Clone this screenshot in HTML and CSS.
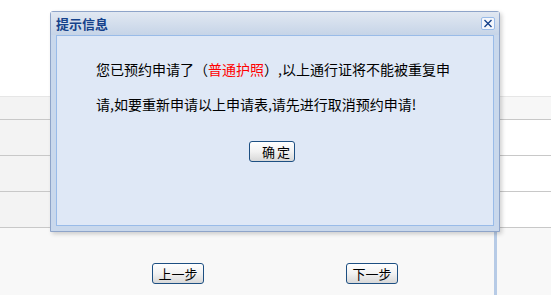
FILE: index.html
```html
<!DOCTYPE html>
<html lang="zh-CN">
<head>
    <meta charset="UTF-8">
    <title>提示信息</title>
    <link rel="stylesheet" href="styles.css">
</head>
<body>

    <div class="page">
        <div class="top"></div>
        <div class="form">
            <div class="row head"><div class="label"></div><div class="value"></div></div>
            <div class="row"><div class="label"></div><div class="value"></div></div>
            <div class="row"><div class="label"></div><div class="value"></div></div>
            <div class="row"><div class="label"></div><div class="value"></div></div>
        </div>
        <div class="steps">
            <button class="btn prev">上一步</button>
            <button class="btn next">下一步</button>
        </div>
        <div class="edge"></div>
    </div>

    <div class="dialog">
        <div class="dialog-title">
            <span>提示信息</span>
            <span class="close">
                <svg width="12" height="11" viewBox="0 0 12 11">
                    <path d="M2.5 2 L9.5 9 M9.5 2 L2.5 9" stroke="#15428b" stroke-width="1.4" fill="none"/>
                </svg>
            </span>
        </div>
        <div class="dialog-body">
            <p class="msg">您已预约申请了（<span class="red">普通护照</span>）,以上通行证将不能被重复申<br>请,如要重新申请以上申请表,请先进行取消预约申请!</p>
            <button class="btn ok">确 定</button>
        </div>
    </div>

</body>
</html>
```

FILE: styles.css
```css
body {
    margin: 0;
    padding: 0;
    font-family: "Noto Sans CJK SC", "DejaVu Sans", sans-serif;
    background-color: #f8f8f8;
    overflow: hidden;
}

.page {
    position: relative;
    height: 295px;
}

.top {
    height: 96px;
    background: #ffffff;
    border-bottom: 1px solid #e6e6e6;
}

.row {
    display: grid;
    grid-template-columns: 220px 1fr;
    height: 35px;
    border-bottom: 1px solid #c8c8c8;
}

.row.head {
    height: 22px;
}

.row .label {
    background: #f3f3f3;
}

.row .value {
    background: #ffffff;
}

.row.head .value {
    background: #f7f7f7;
}

.steps {
    display: flex;
    padding: 35px 0 0 152px;
    gap: 142px;
}

.btn {
    height: 21px;
    border: 1px solid #1d4f82;
    border-radius: 3px;
    background: linear-gradient(#ffffff 0%, #f2f2f2 50%, #d8d8d8 100%);
    font-family: "Noto Sans CJK SC", sans-serif;
    font-size: 13px;
    line-height: 18px;
    padding: 0;
    color: #000;
}

.steps .btn {
    width: 52px;
}

.edge {
    position: absolute;
    left: 494px;
    top: 226px;
    width: 3px;
    height: 69px;
    background: #b7cbe6;
}

.dialog {
    position: absolute;
    left: 50px;
    top: 11px;
    width: 450px;
    height: 221px;
    box-sizing: border-box;
    border: 1px solid #8ea4c9;
    border-radius: 3px 3px 0 0;
    background: #c9d8ec;
    box-shadow: 2px 2px 4px rgba(0, 0, 0, 0.18);
}

.dialog-title {
    height: 23px;
    display: flex;
    align-items: center;
    justify-content: space-between;
    padding: 0 5px 0 5px;
    background: linear-gradient(#e1e8f2, #c6d4e7);
    color: #15428b;
    font-weight: bold;
    font-size: 13px;
}

.close {
    width: 12px;
    height: 11px;
    border: 1px solid #99bbe8;
    border-radius: 2px;
    background: #f4f7fc;
    display: flex;
    margin-right: -1px;
}

.dialog-body {
    margin: 0 5px;
    height: 191px;
    box-sizing: border-box;
    border: 1px solid #99bbe8;
    background: #dfe8f6;
    padding-top: 16px;
}

.msg {
    margin: 0;
    padding-left: 39px;
    font-size: 14px;
    line-height: 35px;
    color: #000;
    white-space: nowrap;
}

.red {
    color: #ff0000;
}

.ok {
    display: block;
    width: 46px;
    margin: 19px 0 0 192px;
    padding-left: 12px;
    text-align: left;
    white-space: nowrap;
    font-size: 13px;
    word-spacing: -1px;
}
```
